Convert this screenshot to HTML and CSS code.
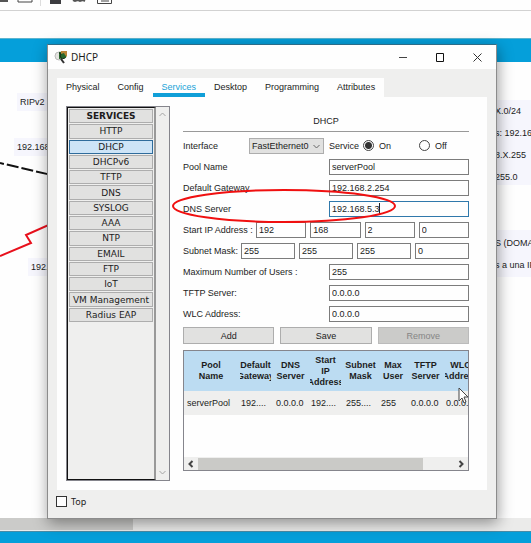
FILE: index.html
```html
<!DOCTYPE html>
<html lang="en">
<head>
<meta charset="utf-8">
<title>DHCP</title>
<link rel="stylesheet" href="styles.css">
</head>
<body>
<div class="desktop">
  <div class="toolbar">
    <svg class="tools" width="120" height="10" viewBox="0 0 120 10" aria-hidden="true">
      <path d="M0 1h8" stroke="#555" stroke-width="2"/>
      <path d="M18 0v2h14V0" fill="none" stroke="#444"/>
      <path d="M40.500 0v6" stroke="#ddd"/>
      <path d="M50 0h11v4H50z" fill="#3c3c40"/>
      <path d="M73 0l2 1 3-1 2 1 3-1 2 1" fill="none" stroke="#555" stroke-width="2"/>
      <path d="M97.500 0v3.500h14V0M101 1h8" fill="none" stroke="#444"/>
    </svg>
  </div>
  <div class="band"></div>
  <main class="canvas">
    <svg class="links" width="60" height="220" viewBox="0 0 60 220" aria-hidden="true">
      <path d="M0 101L60 115" stroke="#111" stroke-width="2" stroke-dasharray="12 3" stroke-dashoffset="8" fill="none"/>
      <path d="M0 194L31 181L26 173L60 158" stroke="#e8101c" stroke-width="2" fill="none"/>
    </svg>
    <span class="note rip">RIPv2</span>
    <span class="note net-a">192.168</span>
    <span class="note net-b">192.</span>
    <div class="note info-a"><p>X.0/24</p><p>s: 192.16</p><p>8.X.255</p><p>255.0</p></div>
    <div class="note info-b"><p>S (DOMAI</p><p>s a una IP</p></div>
  </main>
  <div class="page-scroll"><div class="page-thumb"></div></div>
  <div class="footer"></div>
</div>

<section class="window">
  <header class="titlebar">
    <svg width="14" height="14" viewBox="0 0 14 14" aria-hidden="true">
      <circle cx="5" cy="6" r="4" fill="#e4e4e0" stroke="#bbb"/>
      <path d="M5 2l8-1-1 7-7 1z" fill="#28672c"/>
      <path d="M7 1h6v6l-2-2-1-2-3 1z" fill="#b98537"/>
      <path d="M5 3l2 1-1 2 2 3 3-1" fill="none" stroke="#182c18"/>
      <path d="M7 9l3 4" stroke="#333" stroke-width="2"/>
    </svg>
    <h1>DHCP</h1>
    <div class="controls">
      <button aria-label="Minimize"><svg width="9" height="9" viewBox="0 0 9 9"><path d="M0 4.500h8" stroke="#444"/></svg></button>
      <button aria-label="Maximize"><svg width="9" height="9" viewBox="0 0 9 9"><path d="M.5.500h7v8h-7z" fill="none" stroke="#111"/></svg></button>
      <button aria-label="Close"><svg width="9" height="9" viewBox="0 0 9 9"><path d="M.5.500l8 8m0-8l-8 8" stroke="#333"/></svg></button>
    </div>
  </header>
  <nav class="tabs">
    <button>Physical</button><button>Config</button><button class="active">Services</button><button>Desktop</button><button>Programming</button><button>Attributes</button>
  </nav>
  <div class="panel">
    <aside class="services">
      <div class="service-list">
        <h2>SERVICES</h2>
        <button>HTTP</button>
        <button class="selected">DHCP</button>
        <button>DHCPv6</button>
        <button>TFTP</button>
        <button>DNS</button>
        <button>SYSLOG</button>
        <button>AAA</button>
        <button>NTP</button>
        <button>EMAIL</button>
        <button>FTP</button>
        <button>IoT</button>
        <button>VM Management</button>
        <button>Radius EAP</button>
      </div>
      <div class="vscroll">
        <svg width="7" height="5" viewBox="0 0 7 5"><path d="M.5 4l3-3 3 3" fill="none" stroke="#a4a4a4"/></svg>
        <svg width="7" height="5" viewBox="0 0 7 5"><path d="M.5 1l3 3 3-3" fill="none" stroke="#a4a4a4"/></svg>
      </div>
    </aside>
    <form class="form">
      <h2 class="heading">DHCP</h2>
      <div class="row">
        <label class="iface" for="iface">Interface</label>
        <div class="select"><select id="iface"><option>FastEthernet0</option></select>
          <svg width="7" height="5" viewBox="0 0 7 5"><path d="M.5 1l3 3 3-3" fill="none" stroke="#666"/></svg></div>
        <span class="svc">Service</span>
        <label class="radio on"><input type="radio" name="svc" checked>On</label>
        <label class="radio"><input type="radio" name="svc">Off</label>
      </div>
      <div class="row"><label class="wide" for="pool">Pool Name</label><input id="pool" value="serverPool"></div>
      <div class="row"><label class="wide" for="gw">Default Gateway</label><input id="gw" value="192.168.2.254"></div>
      <div class="row marked"><label class="wide" for="dns">DNS Server</label><div class="focus"><input id="dns" value="192.168.5.3"><span class="caret"></span></div>
        <svg class="ellipse" width="226" height="38" viewBox="0 0 226 38" aria-hidden="true"><ellipse cx="113" cy="19" rx="111" ry="16" fill="none" stroke="#f01010" stroke-width="2"/></svg>
      </div>
      <div class="row octets"><label class="start" for="ip1">Start IP Address :</label><input id="ip1" value="192"><input aria-label="Octet 2" value="168"><input aria-label="Octet 3" value="2"><input aria-label="Octet 4" value="0"></div>
      <div class="row octets"><label class="mask" for="sm1">Subnet Mask:</label><input id="sm1" value="255"><input aria-label="Mask 2" value="255"><input aria-label="Mask 3" value="255"><input aria-label="Mask 4" value="0"></div>
      <div class="row"><label class="wide" for="max">Maximum Number of Users :</label><input id="max" value="255"></div>
      <div class="row"><label class="wide" for="tftp">TFTP Server:</label><input id="tftp" value="0.0.0.0"></div>
      <div class="row"><label class="wide" for="wlc">WLC Address:</label><input id="wlc" value="0.0.0.0"></div>
      <div class="actions"><button type="button">Add</button><button type="button">Save</button><button type="button" disabled>Remove</button></div>
      <div class="grid">
        <div class="view">
          <table>
            <colgroup><col class="c-pool"><col class="c"><col class="c"><col class="c"><col class="c"><col class="c-max"><col class="c"><col class="c"></colgroup>
            <thead><tr>
              <th><div><span>Pool</span><span>Name</span></div></th>
              <th><div><span>Default</span><span>Gateway</span></div></th>
              <th><div><span>DNS</span><span>Server</span></div></th>
              <th><div><span>Start</span><span>IP</span><span>Address</span></div></th>
              <th><div><span>Subnet</span><span>Mask</span></div></th>
              <th><div><span>Max</span><span>User</span></div></th>
              <th><div><span>TFTP</span><span>Server</span></div></th>
              <th><div><span>WLC</span><span>Address</span></div></th>
            </tr></thead>
            <tbody><tr><td>serverPool</td><td>192....</td><td>0.0.0.0</td><td>192....</td><td>255....</td><td>255</td><td>0.0.0.0</td><td>0.0.0.0</td></tr></tbody>
          </table>
        </div>
        <div class="hscroll">
          <svg width="14" height="12" viewBox="0 0 14 12"><path d="M8.500 3l-3 3 3 3" fill="none" stroke="#444" stroke-width="2"/></svg>
          <div class="track"><div class="thumb"></div></div>
          <svg width="14" height="12" viewBox="0 0 14 12"><path d="M5.500 3l3 3-3 3" fill="none" stroke="#444" stroke-width="2"/></svg>
        </div>
        <svg class="cursor" width="12" height="18" viewBox="0 0 12 18" aria-hidden="true"><path d="M1 1v13l3-3 2 5 2-1-2-5h4z" fill="#fff" stroke="#444"/></svg>
      </div>
    </form>
  </div>
  <label class="top"><input type="checkbox">Top</label>
</section>
</body>
</html>
```

FILE: styles.css
```css
* { box-sizing: border-box; }
body { margin: 0; font: 9px/12px "Liberation Sans", Arial, sans-serif; color: #1c1c1c; background: #fefefe; overflow: hidden; }
h1, h2, p { margin: 0; font-weight: normal; }
button, input, select { font: inherit; color: inherit; margin: 0; padding: 0; border: 0; border-radius: 0; min-width: 0; }
svg { display: block; flex: none; }

.desktop { height: 100vh; display: flex; flex-direction: column; }
.toolbar { height: 11px; border-bottom: 1px solid #d2d2d2; }
.band { height: 24px; margin-top: 27px; background: #059fda; border-top: 1px solid #5cb4cf; }
.canvas { position: relative; flex: 1; overflow: hidden; }
.links { position: absolute; left: 0; top: 0; }
.note { position: absolute; background: #f6f6fd; white-space: nowrap; padding: 3px; }
.rip { left: 17px; top: 31px; }
.net-a { left: 14px; top: 76px; }
.net-b { left: 28px; top: 196px; }
.info-a, .info-b { left: 492px; right: 0; line-height: 22px; overflow: hidden; }
.info-a { top: 38px; height: 85px; padding-top: 0; }
.info-b { top: 168px; height: 47px; padding-top: 2px; }
.page-scroll { height: 13px; background: #ebebea; }
.page-thumb { width: 25%; height: 12px; background: #cbcbc9; }
.footer { height: 12px; background: #059fda; border-top: 1px solid #4a8ca6; }

.window { position: absolute; left: 47px; right: 34px; top: 44px; bottom: 24px; display: flex; flex-direction: column; background: #efefee; border: 1px solid #8c8c8c; border-top-color: #2b6c88; box-shadow: 1px 4px 14px rgba(0, 0, 0, .4); }
.titlebar { display: flex; align-items: center; height: 24px; padding-left: 6px; background: #fefefe; }
.titlebar h1 { font: 10px/14px "Noto Sans", sans-serif; margin-left: 3px; }
.controls { display: flex; margin-left: auto; }
.controls button { width: 37px; height: 24px; background: none; display: grid; place-items: center; }
.tabs { display: flex; align-self: flex-start; height: 19px; margin: 9px 0 0 9px; background: #fefefe; }
.tabs button { padding: 3px 9px 0; background: none; border-bottom: 4px solid transparent; line-height: 12px; }
.tabs .active { color: #1ba3d8; border-color: #109fd8; }
.panel { flex: 1; display: flex; margin: 0 9px; padding: 9px 18px 9px 9px; background: #fefefe; }

.services { display: flex; width: 104px; border: 1px solid #85858c; font: 9px/12px "DejaVu Sans", sans-serif; }
.service-list { flex: 1; display: grid; grid-template-rows: repeat(14, 1fr) 155px; gap: 1px; padding: 1px; background: #efefee; border: 1px solid #111; border-right: 2px solid #999; }
.service-list h2 { font: bold 9px/12px "DejaVu Sans", sans-serif; }
.service-list h2, .service-list button { display: flex; align-items: center; justify-content: center; background: #e1e1e0; border: 1px solid #adadad; white-space: nowrap; min-height: 0; }
.service-list .selected { background: #cde4f7; border-color: #2f6c9c; }
.vscroll { width: 13px; display: flex; flex-direction: column; justify-content: space-between; align-items: center; padding: 5px 0; background: #efefee; }

.form { flex: 1; min-width: 0; margin-left: 13px; padding-top: 9px; }
.heading { height: 17px; font-size: 9px; line-height: 12px; text-align: center; border-bottom: 1px solid #999; margin-bottom: 3px; }
.row { position: relative; display: flex; align-items: center; height: 21px; }
.row label, .svc { flex: none; white-space: nowrap; }
.row .wide { width: 146px; }
.row > input, .focus { flex: 1; height: 16px; padding-left: 2px; background: #fefefe; border: 1px solid #7c7c7c; }
.row .focus { display: flex; align-items: center; border-color: #2f78ab; }
.focus input { width: 47px; background: none; outline: 0; }
.caret { width: 1px; height: 11px; background: #222; }
.ellipse { position: absolute; left: -12px; top: -11px; z-index: 2; }
.iface { width: 66px; }
.select { position: relative; width: 75px; height: 16px; }
.select select { width: 100%; height: 100%; padding-left: 2px; appearance: none; background: #e1e1e0; border: 1px solid #adadad; }
.select svg { position: absolute; right: 4px; top: 6px; pointer-events: none; }
.svc { margin-left: 5px; }
.radio { display: flex; align-items: center; gap: 5px; margin-left: 4px; }
.radio.on { margin-right: 24px; }
.radio input { appearance: none; width: 11px; height: 11px; border: 1px solid #444; border-radius: 50%; background: #fefefe; }
.radio input:checked { background: radial-gradient(circle, #333 0 3px, #fefefe 4px); }
.octets { gap: 4px; }
.octets .start { width: 69px; }
.octets .mask { width: 54px; }

.actions { display: grid; grid-template-columns: repeat(3, 1fr); gap: 6px; margin-top: 3px; }
.actions button { height: 17px; background: #e1e1e0; border: 1px solid #adadad; }
.actions button:disabled { color: #858585; background: #cbcbc9; border-color: #bbb; }

.grid { position: relative; height: 121px; margin-top: 6px; display: flex; flex-direction: column; border: 1px solid #85858c; }
.view { flex: 1; overflow: hidden; }
table { table-layout: fixed; width: 294px; border-collapse: collapse; }
.c-pool { width: 54px; }
.c { width: 35px; }
.c-max { width: 30px; }
th { height: 40px; padding: 0 2px; background: #bcdcf2; font-size: 9px; line-height: 11px; }
th div { display: flex; flex-direction: column; align-items: center; overflow: hidden; }
td { height: 24px; padding: 0 0 0 3px; background: #efefee; white-space: nowrap; overflow: hidden; }
.hscroll { display: flex; height: 13px; align-items: center; background: #efefee; }
.track { flex: 1; height: 12px; }
.thumb { width: 88%; height: 12px; background: #cacac7; }
.cursor { position: absolute; right: -2px; top: 36px; z-index: 2; }

.top { display: flex; align-items: center; align-self: flex-start; gap: 4px; height: 28px; padding: 0 0 5px 8px; font: 9px/12px "Noto Sans", sans-serif; }
.top input { appearance: none; width: 11px; height: 11px; border: 1px solid #333; background: #fefefe; }
```
